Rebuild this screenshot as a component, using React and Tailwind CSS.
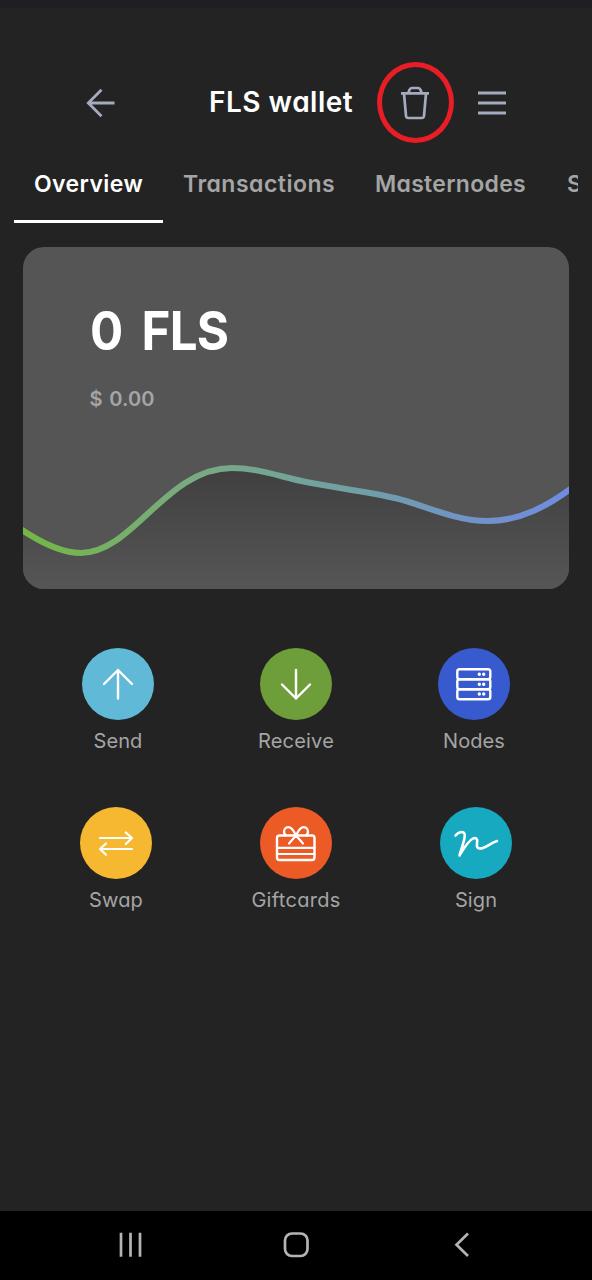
import React from "react";

const tabs = [
  { label: "Overview", width: "w-[149px]", active: true, spacing: "tracking-[0.4px]" },
  { label: "Transactions", width: "w-[192px]", spacing: "tracking-[0.5px]" },
  { label: "Masternodes", width: "w-[192px]", spacing: "tracking-[0.3px]" },
  { label: "S", width: "w-[31px]", spacing: "tracking-normal" },
];

function Action({ label, color, spacing, children }) {
  return (
    <button className="flex w-[100px] flex-col items-center">
      <span className={`flex size-[72px] items-center justify-center rounded-full ${color}`}>
        <svg viewBox="0 0 72 72" className="size-[72px] fill-none stroke-white" strokeWidth="2.4" strokeLinecap="round" strokeLinejoin="round">
          {children}
        </svg>
      </span>
      <span className={`mt-[7px] whitespace-nowrap text-[20px] leading-[28px] text-[#a5a5a5] ${spacing}`}>{label}</span>
    </button>
  );
}

export default function App() {
  return (
    <div className="flex h-[1280px] w-[592px] flex-col overflow-hidden bg-[#232323] font-['Inter',sans-serif] [font-feature-settings:'cv11']">
      <div className="h-[8px] shrink-0 bg-[#1f1f23]" />

      <header className="flex h-[142px] shrink-0 items-center pt-[48px] pl-[85px]">
        <svg viewBox="0 0 32 32" className="size-8 fill-none stroke-[#a4abbe]" strokeWidth="2.8">
          <path d="M16.5 2.8 3.3 16l13.2 13.2M3.5 16h26" />
        </svg>
        <h1 className="mb-[2px] ml-[92px] w-[168px] whitespace-nowrap text-[28px] font-semibold leading-[40px] tracking-[0.5px] text-white">FLS wallet</h1>
        <div className="mt-[-1px] flex h-[81px] w-[77px] items-center justify-center rounded-[50%] border-[5px] border-[#e91d25]">
          <svg viewBox="1 0 32 36" className="h-9 w-8 fill-none stroke-[#a4abbe]" strokeWidth="2.7" strokeLinejoin="round">
            <path d="M2 8.300h28M5 8.500l2 22.300a2.300 2.300 0 0 0 2.300 2.200h13.400a2.300 2.300 0 0 0 2.300-2.200L27 8.500M9.300 8l1.200-3.200a2.600 2.600 0 0 1 2.500-1.800h6a2.600 2.600 0 0 1 2.500 1.800l1.200 3.200" />
          </svg>
        </div>
        <svg viewBox="0 0 28 26" className="ml-[24px] h-[26px] w-7 stroke-[#a4abbe]" strokeWidth="3">
          <path d="M0 3h28M0 13h28M0 23h28" />
        </svg>
      </header>

      <nav className="mx-[14px] flex h-[73px] shrink-0 overflow-hidden">
        {tabs.map((t) => (
          <div
            key={t.label}
            className={`flex h-[73px] shrink-0 whitespace-nowrap border-b-[3px] pl-[20px] pt-[17px] text-[23px] font-semibold leading-[34px] ${t.width} ${t.spacing} ${t.active ? "border-white text-white" : "border-transparent text-[#a5a5a5]"}`}
          >
            {t.label}
          </div>
        ))}
      </nav>

      <section className="mx-[23px] mt-[24px] flex h-[342px] shrink-0 flex-col overflow-hidden rounded-[21px] bg-[#555555]">
        <div className="ml-[67px] mt-[54px] h-[60px] origin-left scale-x-[0.93] whitespace-nowrap text-[53px] font-bold leading-[60px] tracking-[-0.9px] text-white [word-spacing:9px]">0 FLS</div>
        <div className="mt-[24px] h-[28px] whitespace-nowrap pl-[66.500px] text-[20px] font-semibold leading-[28px] tracking-[0.1px] text-[#a5a5a5] [word-spacing:1.5px]">$ 0.00</div>
        <svg viewBox="0 0 546 176" className="h-[176px] w-[546px] shrink-0 fill-none">
          <defs>
            <linearGradient id="line" x1="0" y1="0" x2="1" y2="0">
              <stop offset="0" stopColor="#73b843" />
              <stop offset="0.3" stopColor="#79aa80" />
              <stop offset="0.6" stopColor="#70a0a5" />
              <stop offset="0.8" stopColor="#7094c4" />
              <stop offset="1" stopColor="#718be3" />
            </linearGradient>
            <linearGradient id="fill" gradientUnits="userSpaceOnUse" x1="0" y1="54" x2="0" y2="170">
              <stop offset="0" stopColor="#3f3f3f" />
              <stop offset="1" stopColor="#555555" />
            </linearGradient>
          </defs>
          <path fill="url(#fill)" d="M0 118C20 131 39 140 58 140C110 140 143 55 209 55C235 55 258 64 283 69C313 75 342 78 374 85.500C402 92.500 432 108 465 108C498 108 524 92 546 77V176H0Z" />
          <path stroke="url(#line)" strokeWidth="6" d="M-4 115C18 130 38 140 58 140C110 140 143 55 209 55C235 55 258 64 283 69C313 75 342 78 374 85.500C402 92.500 432 108 465 108C498 108 526 92 550 74" />
        </svg>
      </section>

      <main className="flex grow flex-col">
        <div className="mt-[59px] flex h-[108px] justify-between px-[68px]">
          <Action label="Send" color="bg-[#5fb9d7]" spacing="tracking-[0.1px]">
            <path d="M36 50.500V22M22 36 36 22 50 36" />
          </Action>
          <Action label="Receive" color="bg-[#6d9e3a]" spacing="tracking-[0.2px]">
            <path d="M36 22V50.500M22 36.500 36 50.500 50 36.500" />
          </Action>
          <Action label="Nodes" color="bg-[#385acf]" spacing="tracking-[0.1px]">
            <rect x="19.300" y="21.300" width="33" height="10" rx="2.300" />
            <rect x="19.300" y="31.300" width="33" height="10" rx="2.300" />
            <rect x="19.300" y="41.300" width="33" height="10" rx="2.300" />
            <path strokeWidth="3.400" d="M41.300 26.300h.01M45.700 26.300h.01M41.300 36.200h.01M45.700 36.200h.01M41.300 46h.01M45.700 46h.01" />
          </Action>
        </div>
        <div className="mt-[51px] flex h-[109px] justify-between px-[66px]">
          <Action label="Swap" color="bg-[#f7b831]" spacing="tracking-[0.2px]">
            <path strokeWidth="2.200" d="M20 31H52M45.800 25.500 52 31 45.800 37M52 42H20M26 36.500 20 42 26 47.800" />
          </Action>
          <Action label="Giftcards" color="bg-[#ec5b25]" spacing="tracking-[0.3px]">
            <rect x="17" y="28.500" width="37.500" height="24.500" rx="2.500" />
            <path strokeWidth="2.200" d="M17 40.800H54.500M17 47H54.500M29 36.500 36 28.500 43 36.500M36 28.500C34 24.500 32 20.200 28.500 20.200C24 20.200 22.500 25.500 26 28.300M36 28.500C38 24.500 40 20.200 43.500 20.200C48 20.200 49.500 25.500 46 28.300" />
          </Action>
          <Action label="Sign" color="bg-[#16a9bf]" spacing="tracking-[0.1px]">
            <path strokeWidth="2.600" d="M15.500 28.500C17.500 26 20 25 22.300 25C28.500 25.500 21 41.500 19.500 48.500C23 43 29.500 31 34.800 31C40.500 31.500 33.500 41 39.500 41.500C45 42 49 36.500 57 34" />
          </Action>
        </div>
      </main>

      <footer className="flex h-[69px] shrink-0 items-center justify-between bg-black px-[114px] pb-[2px]">
        <svg viewBox="0 0 32 32" className="size-8 stroke-[#b4b4b4]" strokeWidth="2.700">
          <path d="M7 3.800v24M16.500 3.800v24M26 3.800v24" />
        </svg>
        <svg viewBox="0 0 32 32" className="size-8 fill-none stroke-[#b4b4b4]" strokeWidth="2.700">
          <rect x="5" y="4.500" width="22.500" height="22.500" rx="7" />
        </svg>
        <svg viewBox="0 0 32 32" className="size-8 fill-none stroke-[#b4b4b4]" strokeWidth="2.700">
          <path d="M22 4.500 10.500 15.700 22 27" />
        </svg>
      </footer>
    </div>
  );
}
